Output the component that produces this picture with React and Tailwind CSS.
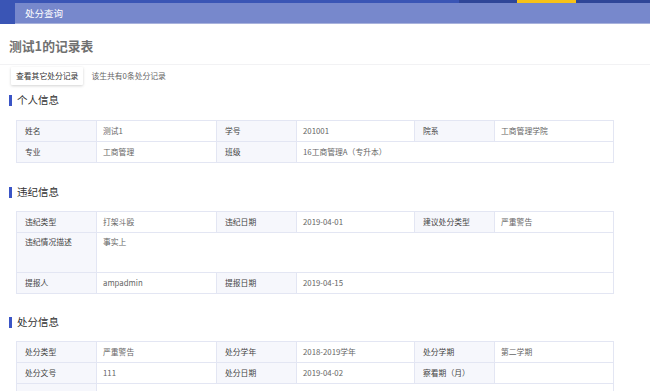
import React from 'react';

const font = { fontFamily: '"Noto Sans CJK SC", "Noto Sans", sans-serif' };

const L = ({ children, className = '' }) => (
  <td className={`border border-[#e3e6f3] bg-[#f6f7fc] pl-[8px] text-[#444] align-middle ${className}`}>{children}</td>
);
const V = ({ children, colSpan, className = '' }) => (
  <td colSpan={colSpan} className={`border border-[#e3e6f3] bg-white pl-[6px] text-[#666] align-middle ${className}`}>{children}</td>
);

const Cols = () => (
  <colgroup>
    <col className="w-[80px]" />
    <col className="w-[120px]" />
    <col className="w-[80px]" />
    <col className="w-[118px]" />
    <col className="w-[80px]" />
    <col className="w-[119px]" />
  </colgroup>
);

const Section = ({ title }) => (
  <div className="flex items-center h-[14px] pl-[9px]">
    <div className="w-[3px] h-[11px] bg-[#3b55c6]" />
    <div className="ml-[5px] text-[10.5px] text-[#333] leading-none">{title}</div>
  </div>
);

export default function App() {
  return (
    <div className="w-[650px] h-[391px] overflow-hidden bg-white text-[7.8px]" style={font}>
      {/* top nav */}
      <div className="flex h-[3px]">
        <div className="w-[459px] bg-[#3a55b5]" />
        <div className="w-[58px] bg-[#2f4698]" />
        <div className="w-[59px] bg-[#f7c118]" />
        <div className="flex-1 bg-[#2f4698]" />
      </div>
      <div className="flex h-[21px]">
        <div className="w-[15px] bg-[#3a55b5]" />
        <div className="flex-1 bg-[#7788cc] border-b border-[#a8b2dc] flex items-center pl-[10px] text-white text-[9.5px]">
          处分查询
        </div>
      </div>

      {/* page header */}
      <div className="h-[41px] flex items-center pl-[9px] pt-[3px] border-b border-[#f2f2f4]">
        <h1 className="text-[12.8px] font-bold text-[#707070]">测试1的记录表</h1>
      </div>

      <div className="flex items-center pl-[11px] pt-[2px] h-[20px]">
        <button className="h-[18px] px-[5px] bg-white text-[#333] text-[7.8px] shadow-[0_1px_3px_rgba(0,0,0,0.18)] rounded-[1px]">
          查看其它处分记录
        </button>
        <span className="ml-[8px] text-[#666]">该生共有0条处分记录</span>
      </div>

      <div className="mt-[8px]">
        <Section title="个人信息" />
      </div>

      <div className="pl-[16px] mt-[13px]">
        <table className="w-[597px] border-collapse table-fixed">
          <Cols />
          <tbody>
            <tr className="h-[21px]">
              <L>姓名</L><V>测试1</V><L>学号</L><V>201001</V><L>院系</L><V>工商管理学院</V>
            </tr>
            <tr className="h-[21px]">
              <L>专业</L><V>工商管理</V><L>班级</L><V colSpan={3}>16工商管理A（专升本）</V>
            </tr>
          </tbody>
        </table>
      </div>

      <div className="mt-[22px]">
        <Section title="违纪信息" />
      </div>

      <div className="pl-[16px] mt-[12px]">
        <table className="w-[597px] border-collapse table-fixed">
          <Cols />
          <tbody>
            <tr className="h-[21px]">
              <L>违纪类型</L><V>打架斗殴</V><L>违纪日期</L><V>2019-04-01</V><L>建议处分类型</L><V>严重警告</V>
            </tr>
            <tr className="h-[40px]">
              <L className="!align-top pt-[3px]">违纪情况描述</L>
              <V colSpan={5} className="!align-top pt-[3px]">事实上</V>
            </tr>
            <tr className="h-[21px]">
              <L>提报人</L><V>ampadmin</V><L>提报日期</L><V colSpan={3}>2019-04-15</V>
            </tr>
          </tbody>
        </table>
      </div>

      <div className="mt-[21px]">
        <Section title="处分信息" />
      </div>

      <div className="pl-[16px] mt-[12px]">
        <table className="w-[597px] border-collapse table-fixed">
          <Cols />
          <tbody>
            <tr className="h-[21px]">
              <L>处分类型</L><V>严重警告</V><L>处分学年</L><V>2018-2019学年</V><L>处分学期</L><V>第二学期</V>
            </tr>
            <tr className="h-[21px]">
              <L>处分文号</L><V>111</V><L>处分日期</L><V>2019-04-02</V><L>察看期（月）</L><V></V>
            </tr>
            <tr className="h-[21px]">
              <L></L><V colSpan={5}></V>
            </tr>
          </tbody>
        </table>
      </div>
    </div>
  );
}
